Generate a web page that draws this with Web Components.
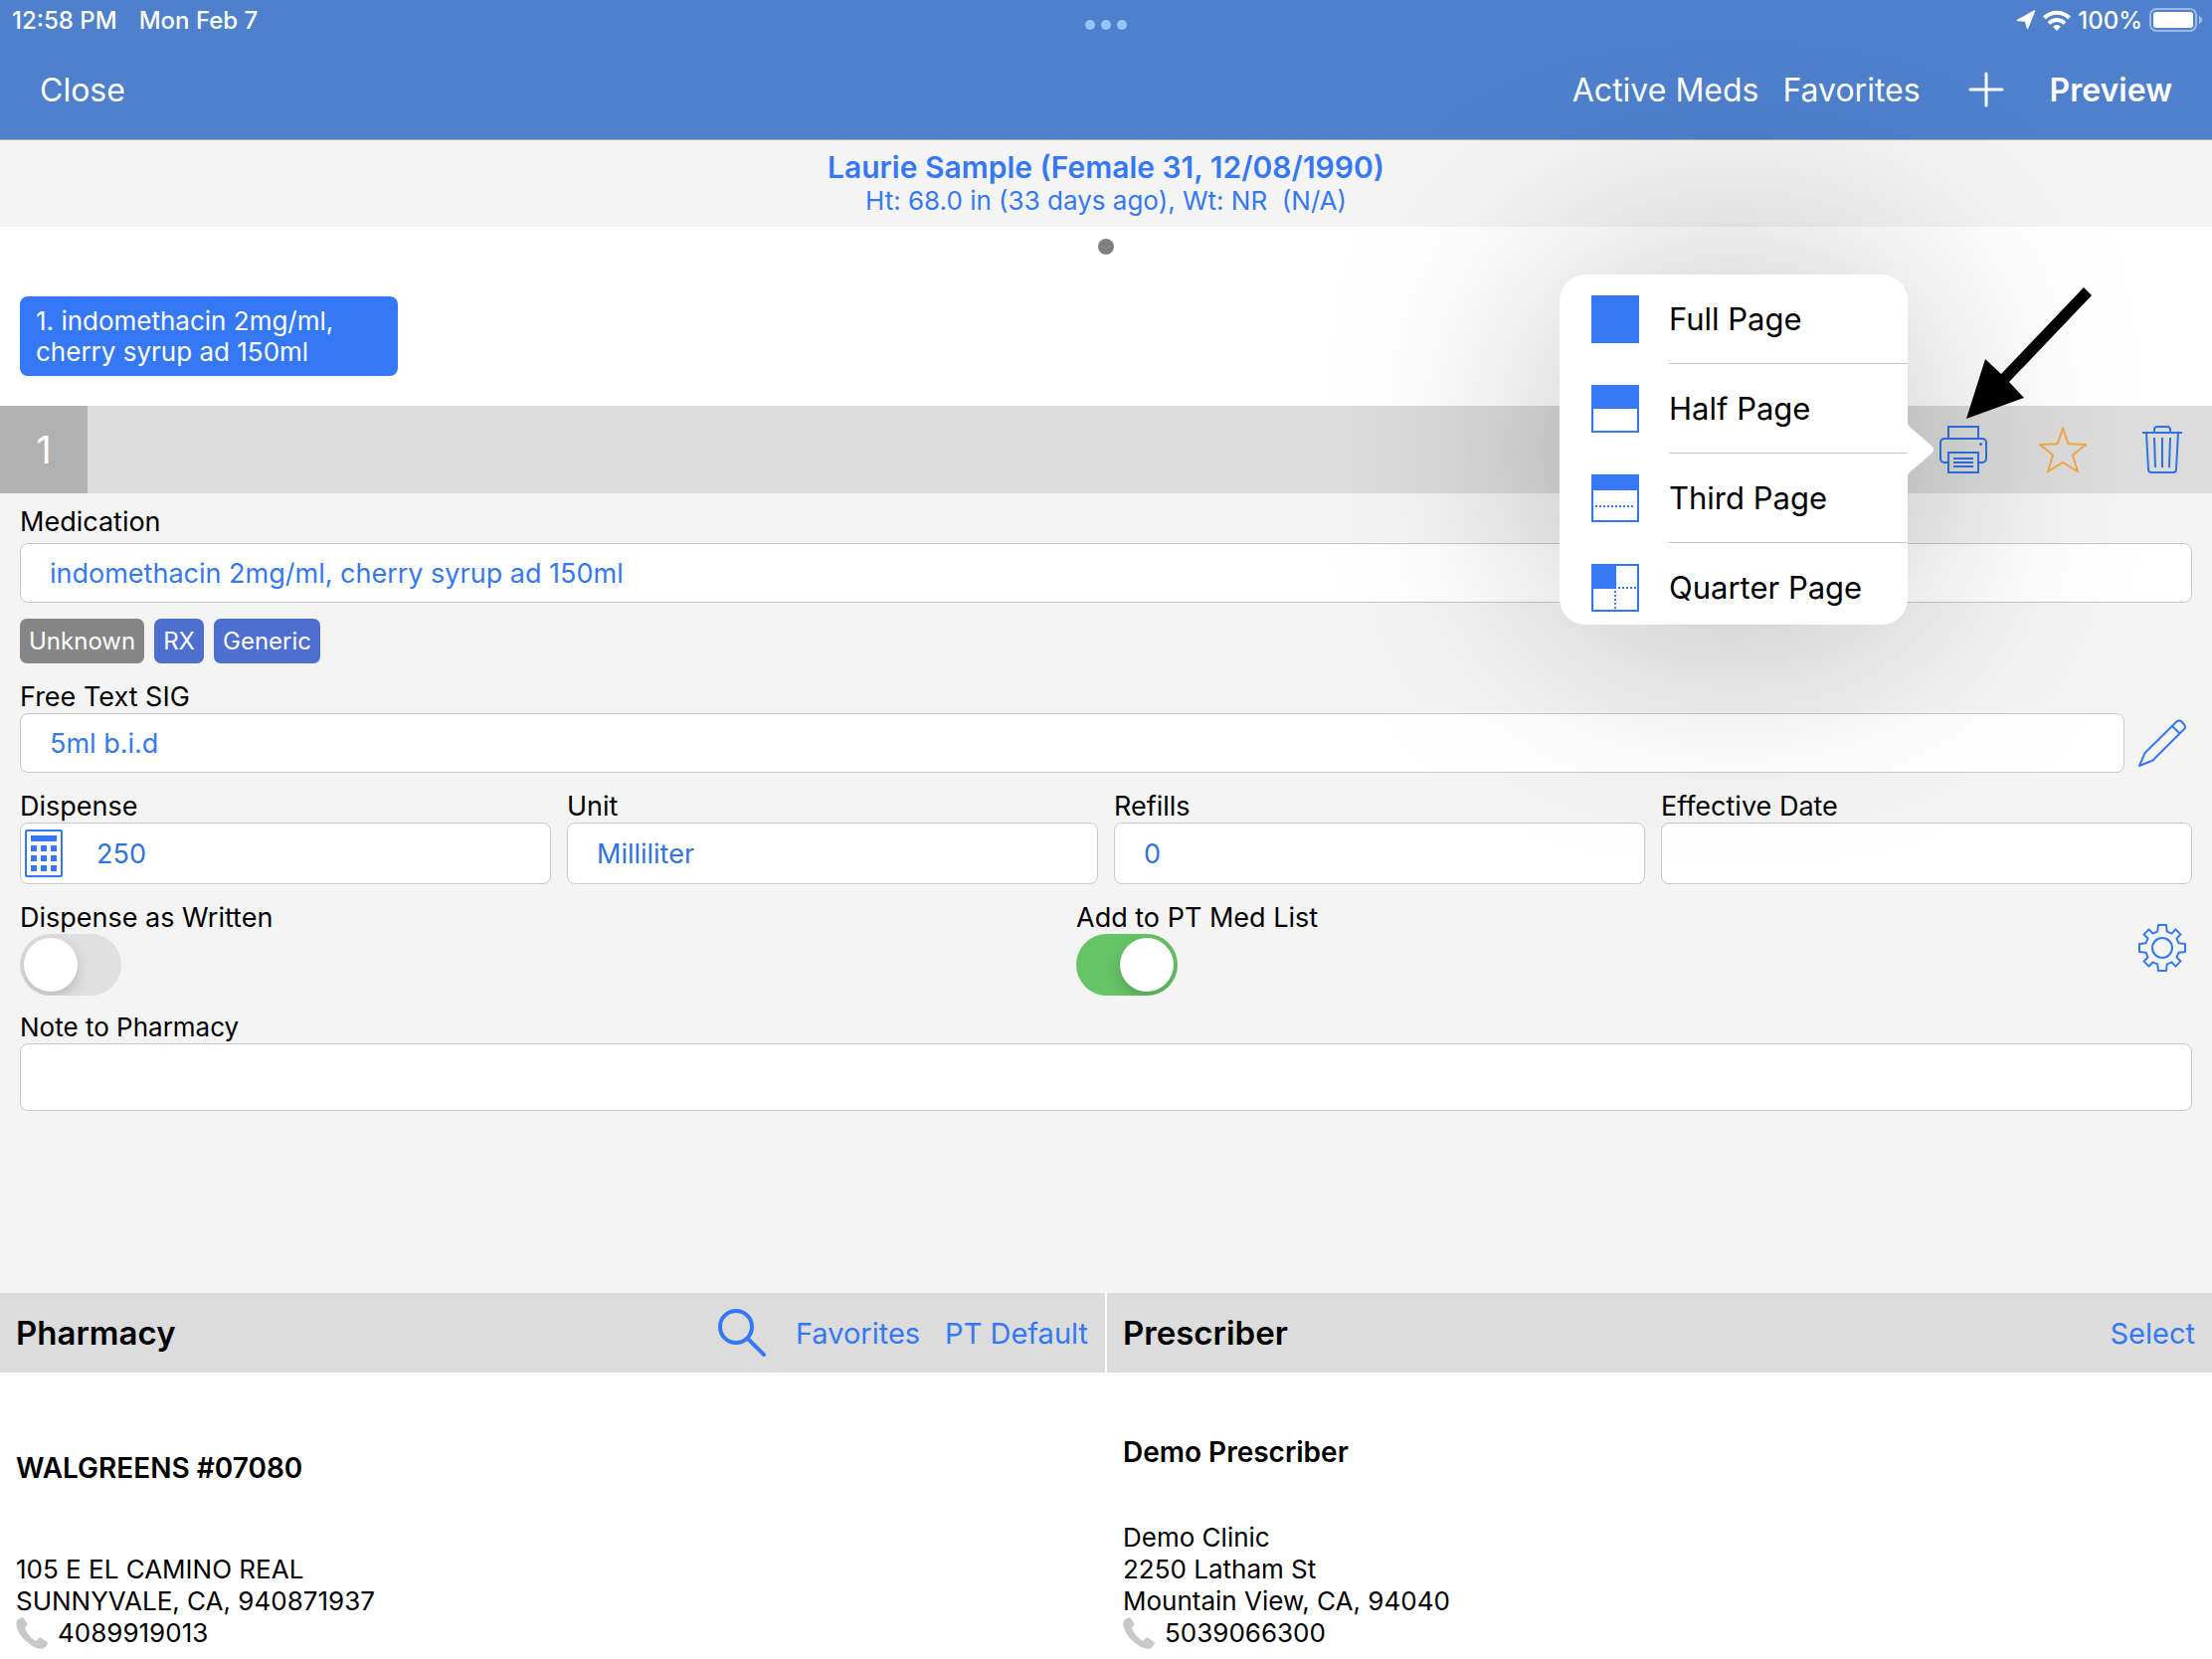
<!DOCTYPE html>
<html lang="en">
<head>
<meta charset="utf-8">
<meta name="viewport" content="width=device-width, initial-scale=1">
<title>Prescription</title>
<style>
  html, body { margin: 0; }
  body {
    font-family: Inter, "Liberation Sans", sans-serif;
    color: #000;
    background: #fff;
    --blue: #3478f6;
    --bar: #dcdcdc;
    --surface: #f4f4f4;
    --line: #c8c8c8;
  }
</style>
</head>
<body>
<rx-app></rx-app>

<script>
const BASE = `
  *, *::before, *::after { box-sizing: border-box; }
  button, input, textarea { font: inherit; color: inherit; margin: 0; padding: 0; border: 0; background: none; border-radius: 0; outline: 0; }
  button { cursor: pointer; display: block; }
  a { color: inherit; text-decoration: none; }
`;

function define(name, html, setup) {
  const template = document.createElement('template');
  template.innerHTML = `<style>${BASE}</style>${html}`;
  customElements.define(name, class extends HTMLElement {
    constructor() {
      super();
      this.attachShadow({ mode: 'open' }).append(template.content.cloneNode(true));
    }
    connectedCallback() {
      if (setup && !this.ready) { this.ready = true; setup(this, this.shadowRoot); }
    }
  });
}

/* ---------- icons ---------- */
const LINE = 'fill="none" stroke="currentColor" stroke-width="2"';
const ICONS = {
  printer: `<g ${LINE}><path d="M9 13V1h30v12"/><path d="M8 37H5a4 4 0 0 1-4-4V17a4 4 0 0 1 4-4h38a4 4 0 0 1 4 4v16a4 4 0 0 1-4 4h-3"/><path d="M9 27h30v20H9z"/><path d="M14 33h20M14 37h20M14 41h20"/></g><circle cx="41.500" cy="18.500" r="1.500" fill="currentColor"/>`,
  star: `<path ${LINE} d="M24 3l5.500 15.200 17.500.800-13 10.500 4.800 16.500L24 37 9.200 46 14 29.500 1 19l17.500-.800z"/>`,
  trash: `<g ${LINE}><path d="M4 7h40"/><path d="M16 7V4a3 3 0 0 1 3-3h10a3 3 0 0 1 3 3v3"/><path d="M8 7l2 37a3 3 0 0 0 3 3h22a3 3 0 0 0 3-3l2-37"/><path d="M16 12l1 30M24 12v30M32 12l-1 30"/></g>`,
  pencil: `<g ${LINE} stroke-linejoin="round"><path d="M1 47l5.500-13L38.500 2.500a3.500 3.500 0 0 1 5 0l2.500 3a3.500 3.500 0 0 1 0 4.500L14.500 41.500z"/><path d="M34 7l7.500 7.500"/></g>`,
  gear: `<g ${LINE} stroke-linejoin="round"><path d="M20 1h8l.8 6.600 4.800 2 3.800-4.200 5.200 5.200-4.200 3.800 2 4.800 6.600.8v8l-6.600.8-2 4.800 4.200 3.800-5.200 5.200-3.800-4.200-4.800 2-.8 6.600h-8l-.8-6.600-4.800-2-3.800 4.200-5.200-5.200 4.200-3.800-2-4.800-6.600-.8v-8l6.600-.8 2-4.800-4.200-3.800 5.200-5.200 3.800 4.200 4.800-2z"/><circle cx="24" cy="24" r="10"/></g>`,
  calculator: `<rect x="6" y="1" width="36" height="46" rx="1" ${LINE}/><path fill="currentColor" d="M11 6h26v6H11zM11 16h6v6h-6zM21 16h6v6h-6zM31 16h6v6h-6zM11 26h6v6h-6zM21 26h6v6h-6zM31 26h6v6h-6zM11 36h6v6h-6zM21 36h6v6h-6zM31 36h6v6h-6z"/>`,
  search: `<g fill="none" stroke="currentColor" stroke-width="4"><circle cx="18" cy="18" r="16"/><path stroke-linecap="round" d="M29.500 29.500L46 46"/></g>`,
  plus: `<path fill="none" stroke="currentColor" stroke-width="3" stroke-linecap="round" d="M24 8v32M8 24h32"/>`,
  phone: `<path transform="scale(1.500)" fill="currentColor" d="M5.500.5c-2 .8-4.600 2-5 4.500-.8 5 3 13 9 18.500 6 5.600 12 8.700 17 8.300 2.500-.5 4.500-3 5.300-5.300.3-1-.2-1.600-1-2.100l-5.500-3.600c-1-.6-2-.4-2.600.5l-1 1.400c-.8 1-2 1-3.200.2-4-3-7-6.500-9-10.500-.6-1.200-.2-2.400.6-3l.7-.6c.9-.6 1-1.600.5-2.600L7.800 1C7.300.3 6.400.1 5.500.5z"/>`,
  full: `<path fill="currentColor" d="M0 0h48v48H0z"/>`,
  half: `<path ${LINE} d="M1 1h46v46H1z"/><path fill="currentColor" d="M0 0h48v24H0z"/>`,
  third: `<path ${LINE} d="M1 1h46v46H1z"/><path fill="currentColor" d="M0 0h48v16H0z"/><path ${LINE} stroke-dasharray="2 2" d="M4 32h40"/>`,
  quarter: `<path ${LINE} d="M1 1h46v46H1z"/><path fill="currentColor" d="M0 0h25v25H0z"/><path ${LINE} stroke-dasharray="2 2" d="M27 24h18M24 27v18"/>`
};
define('ui-icon', `<style>
  :host { display: block; flex: none; width: 48px; height: 48px; }
  svg { display: block; width: 100%; height: 100%; }
</style><svg viewBox="0 0 48 48" aria-hidden="true"></svg>`, (host, root) => {
  root.querySelector('svg').innerHTML = ICONS[host.getAttribute('name')] || '';
});

/* ---------- status bar ---------- */
define('status-bar', `<style>
  :host { display: grid; grid-template-columns: 1fr auto 1fr; align-items: center; height: 40px; padding: 0 10px 0 12px; font-size: 24px; font-weight: 500; }
  .left, .right, .dots { display: flex; align-items: center; }
  .left { gap: 22px; }
  .right { justify-content: flex-end; gap: 7px; }
  .dots { gap: 6px; padding: 10px 2px 0 0; }
  .dots i { width: 10px; height: 10px; border-radius: 50%; background: #95c4ff; }
  svg { display: block; }
</style>
<div class="left"><span>12:58 PM</span><span>Mon Feb 7</span></div>
<div class="dots"><i></i><i></i><i></i></div>
<div class="right">
  <svg width="20" height="20" viewBox="0 0 20 20"><path fill="#fff" d="M18.500 1L11.500 18.500 9.500 11 1.500 10.500z" stroke="#fff" stroke-width="1.500" stroke-linejoin="round"/></svg>
  <svg width="28" height="21" viewBox="0 0 28 21"><g fill="none" stroke="#fff" stroke-width="4"><path d="M1.500 8a17.500 17.500 0 0 1 25 0"/><path d="M6 13.500a11 11 0 0 1 16 0"/></g><path fill="#fff" d="M14 21l-4-4.200a5.600 5.600 0 0 1 8 0z"/></svg>
  <span>100%</span>
  <svg width="53" height="24" viewBox="0 0 53 24"><rect x="1" y="1" width="46" height="22" rx="6" fill="none" stroke="#fff" stroke-opacity=".45" stroke-width="2"/><rect x="4" y="4" width="40" height="16" rx="3" fill="#fff"/><path d="M50 8c4 1.500 4 6.500 0 8z" fill="#fff" fill-opacity=".5"/></svg>
</div>`);

/* ---------- navigation bar ---------- */
define('nav-bar', `<style>
  :host { display: flex; align-items: center; height: 100px; padding: 0 40px; font-size: 32px; }
  .spacer { flex: 1; }
  .group { display: flex; align-items: center; gap: 24px; }
  .add { margin: 0 16px 0 18px; }
  .strong { font-weight: 600; }
</style>
<button type="button">Close</button>
<span class="spacer"></span>
<div class="group">
  <button type="button">Active Meds</button>
  <button type="button">Favorites</button>
  <button type="button" class="add" aria-label="Add"><ui-icon name="plus"></ui-icon></button>
  <button type="button" class="strong">Preview</button>
</div>`);

/* ---------- patient banner ---------- */
define('patient-banner', `<style>
  :host { display: block; padding: 9px 20px 10px; border-top: 1px solid #a9a9a9; text-align: center; color: var(--blue); background: var(--surface); }
  h1 { margin: 0; font-size: 30px; line-height: 36px; font-weight: 600; }
  p { margin: 0; font-size: 26px; line-height: 32px; white-space: pre; }
</style><h1><slot name="name"></slot></h1><p><slot></slot></p>`);

/* ---------- strip of medication chips ---------- */
define('med-strip', `<style>
  :host { display: flex; flex-direction: column; padding: 12px 20px 30px; background: #fff; }
  .page { align-self: center; width: 16px; height: 16px; margin-bottom: 42px; border-radius: 50%; background: #808080; }
  .chips { display: flex; gap: 16px; }
</style><div class="page"></div><div class="chips"><slot></slot></div>`);

define('med-chip', `<style>
  :host { display: block; width: 380px; }
  button { width: 100%; padding: 9px 16px; border-radius: 8px; background: var(--blue); color: #fff; font-size: 26px; line-height: 31px; text-align: left; }
</style><button type="button"><slot></slot></button>`);

/* ---------- print menu ---------- */
define('menu-row', `<style>
  :host { display: block; }
  button { display: flex; align-items: stretch; gap: 30px; width: 100%; height: 90px; padding-left: 32px; font-size: 31px; text-align: left; }
  ui-icon { align-self: center; color: var(--blue); }
  span { flex: 1; display: flex; align-items: center; border-bottom: 1px solid #c6c6c6; }
</style><button type="button" role="menuitem"><ui-icon></ui-icon><span><slot></slot></span></button>`, (host, root) => {
  const icon = document.createElement('ui-icon');
  icon.setAttribute('name', host.getAttribute('icon'));
  root.querySelector('ui-icon').replaceWith(icon);
});

define('print-menu', `<style>
  :host { display: block; width: 350px; height: 352px; }
  .glow { position: absolute; inset: 0; background: #000; opacity: .25; filter: blur(120px); pointer-events: none; }
  .list { position: relative; height: 100%; overflow: hidden; border-radius: 26px; background: #fff; }
  svg { position: absolute; left: 100%; top: 146px; width: 27px; height: 60px; }
</style>
<div class="glow"></div>
<div class="list" role="menu"><slot></slot></div>
<svg viewBox="0 0 27 60"><path fill="#fff" d="M-1 0c0 4 2 6 4 8l21 18q4 4 0 8L3 52c-2 2-4 4-4 8z"/></svg>`);

/* ---------- toolbar above the form ---------- */
define('med-toolbar', `<style>
  :host { position: relative; z-index: 2; display: flex; align-items: center; height: 88px; padding-right: 26px; background: var(--bar); }
  .index { display: flex; align-items: center; justify-content: center; align-self: stretch; width: 88px; background: #b1b1b1; color: #fff; font-size: 38px; }
  .actions { display: flex; gap: 52px; margin-left: auto; color: #2f72e4; }
  .fav { color: #f3a942; }
  print-menu { position: absolute; right: 306px; top: -132px; }
  .pointer { position: absolute; right: 116px; top: -120px; width: 136px; height: 136px; pointer-events: none; }
</style>
<div class="index"><slot></slot></div>
<div class="actions">
  <button type="button" aria-label="Print"><ui-icon name="printer"></ui-icon></button>
  <button type="button" class="fav" aria-label="Favorite"><ui-icon name="star"></ui-icon></button>
  <button type="button" aria-label="Delete"><ui-icon name="trash"></ui-icon></button>
</div>
<print-menu>
  <menu-row icon="full">Full Page</menu-row>
  <menu-row icon="half">Half Page</menu-row>
  <menu-row icon="third">Third Page</menu-row>
  <menu-row icon="quarter">Quarter Page</menu-row>
</print-menu>
<svg class="pointer" viewBox="0 0 136 136"><path d="M5 133L24 73l16 15 83-87 8 8-83 87 15 16z"/></svg>`);

/* ---------- form controls ---------- */
define('text-field', `<style>
  :host { display: block; min-width: 0; font-size: 27px; }
  label { display: block; padding-top: 2px; line-height: 32px; }
  .box { display: flex; align-items: center; height: var(--box, 60px); margin-top: var(--gap, 0); border: 1px solid var(--line); border-radius: 8px; background: #fff; color: var(--blue); }
  input { flex: 1; min-width: 0; height: 100%; padding: 0 29px; color: var(--ink, var(--blue)); }
  ui-icon:first-child { margin-left: -1px; }
</style><label for="f"></label><div class="box"><input id="f" type="text"></div>`, (host, root) => {
  root.querySelector('label').textContent = host.getAttribute('label');
  root.querySelector('input').value = host.getAttribute('value') || '';
  if (host.hasAttribute('icon')) {
    const icon = document.createElement('ui-icon');
    icon.setAttribute('name', host.getAttribute('icon'));
    root.querySelector('.box').prepend(icon);
  }
});

define('toggle-switch', `<style>
  :host { display: block; flex: 1; font-size: 27px; }
  label { display: block; padding-top: 2px; line-height: 32px; }
  input { display: block; appearance: none; width: 102px; height: 62px; padding: 4px; border-radius: 31px; background: #e0e0e0; overflow: hidden; }
  input::before { content: ""; display: block; width: 54px; height: 54px; border-radius: 50%; background: #fff; box-shadow: 0 5px 14px rgba(0, 0, 0, .18); }
  input:checked { background: #65c466; }
  input:checked::before { margin-left: auto; }
</style><label for="s"></label><input id="s" type="checkbox" role="switch">`, (host, root) => {
  root.querySelector('label').textContent = host.getAttribute('label');
  root.querySelector('input').checked = host.hasAttribute('on');
});

define('tag-pill', `<style>
  :host { display: block; padding: 0 9px; border-radius: 7px; background: #4d6fd0; color: #fff; font-size: 24px; line-height: 45px; }
  :host([muted]) { background: #868686; }
</style><slot></slot>`);

define('rx-form', `<style>
  :host { display: flex; flex-direction: column; gap: 16px; padding: 11px 20px 20px; background: var(--surface); }
  .med { --gap: 5px; }
  .tags { display: flex; gap: 10px; }
  .sig { display: flex; align-items: flex-end; gap: 14px; padding-right: 6px; }
  .sig text-field { flex: 1; }
  .sig button { margin-bottom: 6px; }
  .quad { display: grid; grid-template-columns: repeat(4, 1fr); gap: 16px; --box: 62px; --ink: #3173dd; }
  .switches { display: flex; align-items: center; padding-right: 6px; margin-bottom: -2px; }
  .switches button { margin-left: 6px; }
  .note { --box: 68px; font-size: 26px; }
  button { color: var(--blue); }
</style>
<text-field class="med" label="Medication" value="indomethacin 2mg/ml, cherry syrup ad 150ml"></text-field>
<div class="tags"><tag-pill muted>Unknown</tag-pill><tag-pill>RX</tag-pill><tag-pill>Generic</tag-pill></div>
<div class="sig">
  <text-field label="Free Text SIG" value="5ml b.i.d"></text-field>
  <button type="button" aria-label="Edit SIG"><ui-icon name="pencil"></ui-icon></button>
</div>
<div class="quad">
  <text-field label="Dispense" value="250" icon="calculator"></text-field>
  <text-field label="Unit" value="Milliliter"></text-field>
  <text-field label="Refills" value="0"></text-field>
  <text-field label="Effective Date"></text-field>
</div>
<div class="switches">
  <toggle-switch label="Dispense as Written"></toggle-switch>
  <toggle-switch label="Add to PT Med List" on></toggle-switch>
  <button type="button" aria-label="Settings"><ui-icon name="gear"></ui-icon></button>
</div>
<text-field class="note" label="Note to Pharmacy"></text-field>`);

/* ---------- contact panels ---------- */
define('contact-panel', `<style>
  :host { display: block; background: #fff; }
  header { display: flex; align-items: center; height: 80px; padding: 0 17px 0 16px; background: var(--bar); }
  h2 { margin: 0; flex: 1; font-size: 33px; font-weight: 600; }
  .actions { display: flex; align-items: center; gap: 25px; color: var(--blue); font-size: 29px; }
  ::slotted(.lookup) { margin-right: 5px !important; }
  .body { padding: var(--lead, 64px) 16px 10px; font-size: 26px; line-height: 32px; }
  h3 { margin: 0 0 var(--gap, 54px); font-size: 28px; line-height: 32px; font-weight: 600; }
  .phone { display: flex; align-items: center; gap: 10px; }
  .phone ui-icon { width: 32px; height: 32px; color: #c8c8c8; }
</style>
<header><h2><slot name="title"></slot></h2><div class="actions"><slot name="action"></slot></div></header>
<div class="body">
  <h3><slot name="name"></slot></h3>
  <slot></slot>
  <div class="phone"><ui-icon name="phone"></ui-icon><slot name="phone"></slot></div>
</div>`);

/* ---------- page ---------- */
define('rx-app', `<style>
  :host { display: flex; flex-direction: column; min-height: 100vh; }
  .top { background: #4e80cc; color: #fff; }
  rx-form { flex: 1; }
  .contacts { display: grid; grid-template-columns: 1fr 1fr; gap: 2px; background: #fff; }
  .pharmacy { --lead: 80px; --gap: 70px; }
</style>
<div class="top"><status-bar></status-bar><nav-bar></nav-bar></div>
<patient-banner><span slot="name">Laurie Sample (Female 31, 12/08/1990)</span>Ht: 68.0 in (33 days ago), Wt: NR  (N/A)</patient-banner>
<med-strip><med-chip>1. indomethacin 2mg/ml, cherry syrup ad 150ml</med-chip></med-strip>
<med-toolbar>1</med-toolbar>
<rx-form></rx-form>
<div class="contacts">
  <contact-panel class="pharmacy">
    <span slot="title">Pharmacy</span>
    <button slot="action" class="lookup" type="button" aria-label="Search"><ui-icon name="search"></ui-icon></button>
    <button slot="action" type="button">Favorites</button>
    <button slot="action" type="button">PT Default</button>
    <span slot="name">WALGREENS #07080</span>
    <div>105 E EL CAMINO REAL</div>
    <div>SUNNYVALE, CA, 940871937</div>
    <a slot="phone" href="tel:4089919013">4089919013</a>
  </contact-panel>
  <contact-panel>
    <span slot="title">Prescriber</span>
    <button slot="action" type="button">Select</button>
    <span slot="name">Demo Prescriber</span>
    <div>Demo Clinic</div>
    <div>2250 Latham St</div>
    <div>Mountain View, CA, 94040</div>
    <a slot="phone" href="tel:5039066300">5039066300</a>
  </contact-panel>
</div>`);
</script>
</body>
</html>
